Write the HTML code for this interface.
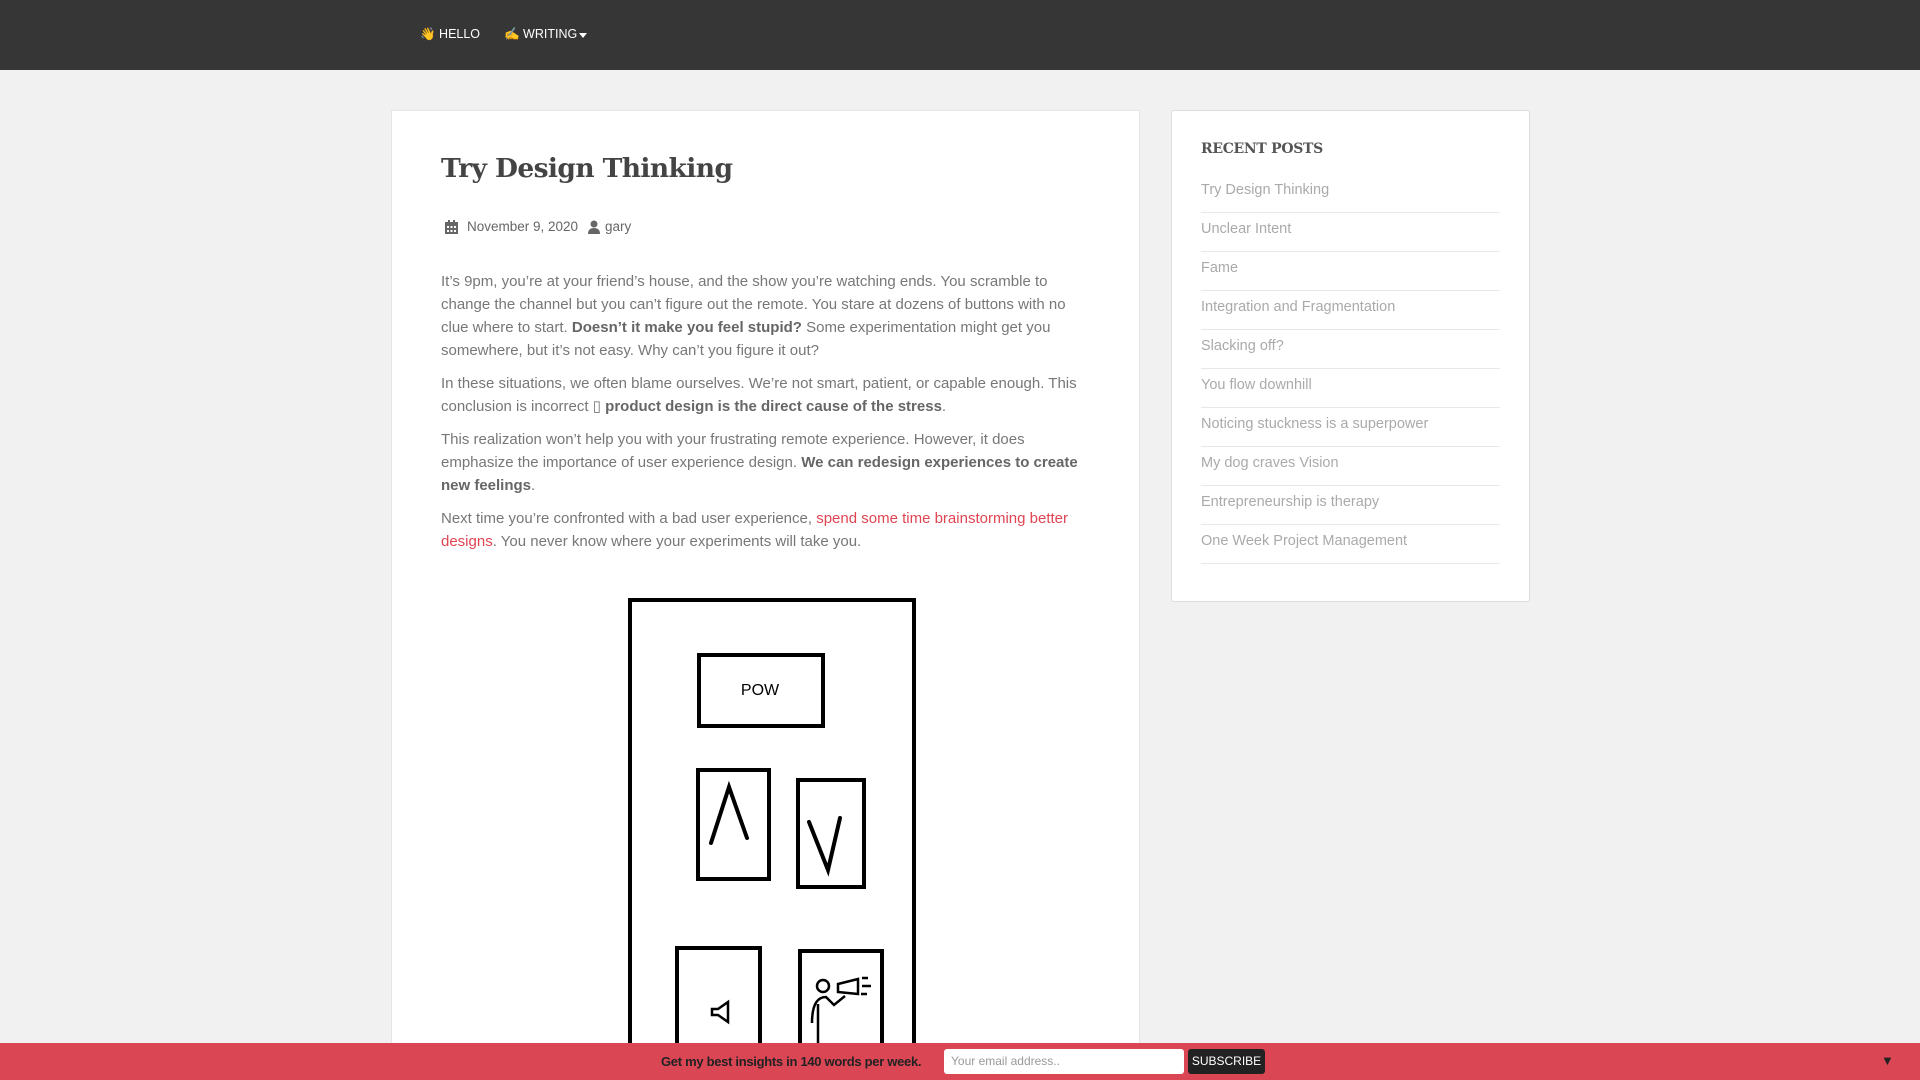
<!DOCTYPE html>
<html><head><meta charset="utf-8"><style>
*{margin:0;padding:0;box-sizing:border-box}
html{width:1920px;height:1080px;overflow:hidden}
body{width:1920px;height:1080px;overflow:hidden;background:#f1f1f1;font-family:"Liberation Sans",sans-serif;position:relative}
.nav{position:absolute;left:0;top:0;width:1920px;height:70px;background:#363636;color:#fff;font-size:12.5px}
.nav span{position:absolute;top:27px}
.caret{position:absolute;left:579px;top:33px;width:0;height:0;border-left:4px solid transparent;border-right:4px solid transparent;border-top:5px solid #fff}
.card{position:absolute;left:391px;top:110px;width:749px;height:970px;background:#fff;border:1px solid #e5e5e5}
.side{position:absolute;left:1171px;top:110px;width:359px;height:492px;background:#fff;border:1px solid #ddd;border-radius:3px}
h1{position:absolute;left:441px;top:153px;font-family:"DejaVu Serif","Liberation Serif",serif;font-size:26.5px;color:#444;letter-spacing:-0.6px}
.meta{position:absolute;left:441px;top:219px;font-size:13.5px;color:#666}
.txt{position:absolute;left:441px;top:270px;width:680px;font-size:15px;line-height:23px;color:#777}
.txt p{margin-bottom:10px;white-space:nowrap}
.txt b{color:#666}
.txt a{color:#e04552;text-decoration:none}
.side h3{position:absolute;left:29px;top:30px;font-family:"DejaVu Serif","Liberation Serif",serif;font-size:14px;color:#555;letter-spacing:-0.3px}
.side ul{position:absolute;left:29px;top:63px;width:299px;list-style:none}
.side li{height:39px;border-bottom:1px solid #e8e8e8;font-size:14.5px;color:#aaa;line-height:32px}
.foot{position:absolute;left:0;top:1043px;width:1920px;height:37px;background:#db4654}
.foot .t{position:absolute;left:661px;top:11px;font-size:13px;font-weight:bold;color:#222;letter-spacing:-0.3px}
.foot .in{position:absolute;left:944px;top:6px;width:240px;height:25px;background:#fff;border-radius:3px;font-size:12px;color:#999;padding:5px 7px}
.foot .b{position:absolute;left:1188px;top:6px;width:77px;height:25px;background:#222;border-radius:3px;color:#fff;font-size:12px;text-align:center;line-height:25px}
.foot .x{position:absolute;left:1881px;top:10px;color:#222;font-size:13px}
</style></head><body>
<div class="nav"><span style="left:420px">👋 HELLO</span><span style="left:504px">✍ WRITING</span><div class="caret"></div></div>
<div class="card"></div>
<h1>Try Design Thinking</h1>
<div class="meta"><svg width="13" height="14" style="position:absolute;left:4px;top:1px" viewBox="0 0 13 14"><rect x="0" y="2" width="13" height="12" fill="#666"/><rect x="3" y="0" width="2" height="3" fill="#666"/><rect x="8" y="0" width="2" height="3" fill="#666"/><g fill="#fff"><rect x="2" y="6" width="2" height="2"/><rect x="5.5" y="6" width="2" height="2"/><rect x="9" y="6" width="2" height="2"/><rect x="2" y="10" width="2" height="2"/><rect x="5.5" y="10" width="2" height="2"/><rect x="9" y="10" width="2" height="2"/></g></svg><span style="position:absolute;left:26px;white-space:nowrap">November 9, 2020</span><svg width="12" height="14" style="position:absolute;left:147px;top:1px" viewBox="0 0 12 14"><circle cx="6" cy="4" r="3.5" fill="#666"/><path d="M0 14 Q0 8 6 8 Q12 8 12 14Z" fill="#666"/></svg><span style="position:absolute;left:164px">gary</span></div>
<div class="txt">
<p>It’s 9pm, you’re at your friend’s house, and the show you’re watching ends. You scramble to<br>change the channel but you can’t figure out the remote. You stare at dozens of buttons with no<br>clue where to start. <b>Doesn’t it make you feel stupid?</b> Some experimentation might get you<br>somewhere, but it’s not easy. Why can’t you figure it out?</p>
<p>In these situations, we often blame ourselves. We’re not smart, patient, or capable enough. This<br>conclusion is incorrect ▯ <b>product design is the direct cause of the stress</b>.</p>
<p>This realization won’t help you with your frustrating remote experience. However, it does<br>emphasize the importance of user experience design. <b>We can redesign experiences to create<br>new feelings</b>.</p>
<p>Next time you’re confronted with a bad user experience, <a>spend some time brainstorming better<br>designs</a>. You never know where your experiments will take you.</p>
</div>
<svg style="position:absolute;left:0;top:0" width="1920" height="1080" fill="none" stroke="#000" stroke-width="4">
<rect x="630" y="600" width="284" height="500"/>
<rect x="699" y="655" width="124" height="71"/>
<text x="760" y="691" font-family="Liberation Sans" font-size="16" fill="#000" stroke="none" text-anchor="middle" dominant-baseline="middle">POW</text>
<rect x="698" y="770" width="71" height="109"/>
<path d="M711 843 L729 787 L747 838" stroke-linecap="round"/>
<rect x="798" y="780" width="66" height="107"/>
<path d="M809 822 L828 870 L840 818" stroke-linecap="round"/>
<rect x="677" y="948" width="83" height="140"/>
<path d="M712 1009 h6 l10 -7 v20 l-10 -7 h-6z" stroke-width="2.5"/>
<rect x="800" y="951" width="82" height="140"/>
<circle cx="823" cy="986" r="6" stroke-width="2.5"/>
<path d="M812 1023 Q812 997 826 997 L834 1005 L845 996 M818 1004 V1045 M838 984 L858 979 V994 L838 992Z M862 978 h6 M862 986 h9 M861 994 h6" stroke-width="2.5"/>
</svg>
<div class="side"><h3>RECENT POSTS</h3><ul>
<li>Try Design Thinking</li><li>Unclear Intent</li><li>Fame</li><li>Integration and Fragmentation</li><li>Slacking off?</li><li>You flow downhill</li><li>Noticing stuckness is a superpower</li><li>My dog craves Vision</li><li>Entrepreneurship is therapy</li><li>One Week Project Management</li></ul></div>
<div class="foot"><span class="t">Get my best insights in 140 words per week.</span><div class="in">Your email address..</div><div class="b">SUBSCRIBE</div><span class="x">▼</span></div>
</body></html>
